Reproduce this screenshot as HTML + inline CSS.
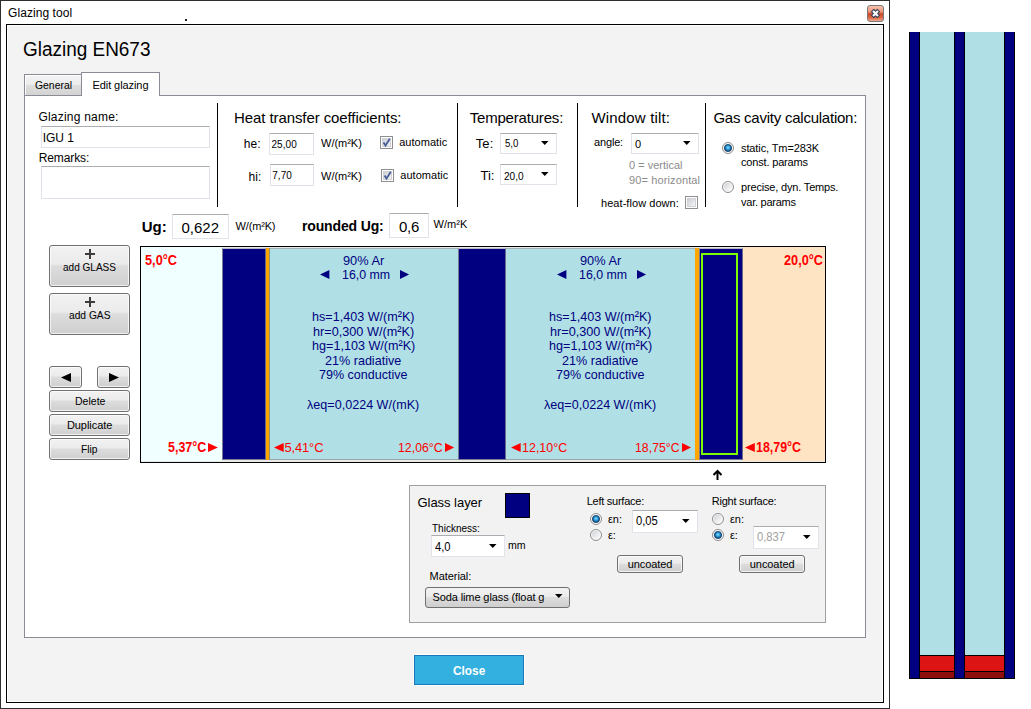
<!DOCTYPE html><html><head><meta charset="utf-8"><style>
html,body{margin:0;padding:0;background:#fff;width:1031px;height:709px;overflow:hidden;position:relative}
body{font-family:"Liberation Sans",sans-serif;color:#000}
.t{position:absolute;white-space:nowrap}
svg{overflow:visible}
</style></head><body>
<div style="position:absolute;left:0px;top:0px;width:890px;height:709px;box-sizing:border-box;border:1px solid #2e2e2e;background:#fff;"></div>
<div class="t" style="left:8.10px;top:6.54px;font-size:12px;line-height:12px;letter-spacing:0.058px;">Glazing tool</div>
<div style="position:absolute;left:185px;top:19px;width:2px;height:2px;background:#222"></div>
<div style="position:absolute;left:867px;top:5px;width:17px;height:17px;box-sizing:border-box;border:1px solid #7a7a7a;border-radius:3px;background:linear-gradient(#f8c3ae 0%,#ec9275 40%,#c8482a 52%,#d9633f 75%,#f0a88c 100%);"></div>
<svg style="position:absolute;left:867px;top:5px" width="17" height="17"><path d="M6.8 6.8 L10.2 10.2 M10.2 6.8 L6.8 10.2" stroke="#2f3e55" stroke-width="4.2" stroke-linecap="square"/><path d="M6.8 6.8 L10.2 10.2 M10.2 6.8 L6.8 10.2" stroke="#fff" stroke-width="2.2" stroke-linecap="square"/></svg>
<div style="position:absolute;left:6px;top:24px;width:878px;height:679px;box-sizing:border-box;border:1px solid #000;background:#f3f3f3;box-shadow:inset 0 0 0 1px #fff;"></div>
<div class="t" style="left:22.80px;top:39.07px;font-size:20px;line-height:20px;transform:scaleX(0.9473);transform-origin:0 0;">Glazing EN673</div>
<div style="position:absolute;left:24px;top:74px;width:58px;height:22px;box-sizing:border-box;border:1px solid #898c95;border-bottom:none;background:linear-gradient(#f4f4f4 0%,#ececec 45%,#dedede 50%,#d2d2d2 100%);box-shadow:inset 1px 1px 0 #fff;"></div>
<div style="position:absolute;left:24px;top:95px;width:842px;height:543px;box-sizing:border-box;border:1px solid #898c95;background:#fff;"></div>
<div style="position:absolute;left:81px;top:72px;width:79px;height:24px;box-sizing:border-box;border:1px solid #898c95;border-bottom:none;background:#fff;"></div>
<div class="t" style="left:35.00px;top:79.79px;font-size:11px;line-height:11px;transform:scaleX(0.9448);transform-origin:0 0;">General</div>
<div class="t" style="left:92.50px;top:79.69px;font-size:11px;line-height:11px;letter-spacing:-0.079px;">Edit glazing</div>
<div style="position:absolute;left:217px;top:103px;width:1px;height:104px;box-sizing:border-box;background:#000;"></div>
<div style="position:absolute;left:457px;top:103px;width:1px;height:104px;box-sizing:border-box;background:#000;"></div>
<div style="position:absolute;left:577px;top:103px;width:1px;height:104px;box-sizing:border-box;background:#000;"></div>
<div style="position:absolute;left:705px;top:103px;width:1px;height:104px;box-sizing:border-box;background:#000;"></div>
<div class="t" style="left:38.40px;top:110.64px;font-size:12px;line-height:12px;letter-spacing:0.217px;">Glazing name:</div>
<div style="position:absolute;left:41px;top:126px;width:169px;height:22px;box-sizing:border-box;background:#fff;border:1px solid #e2e3ea;border-top-color:#abadb3;"></div>
<div class="t" style="left:42.80px;top:131.84px;font-size:12px;line-height:12px;letter-spacing:-0.080px;">IGU 1</div>
<div class="t" style="left:38.70px;top:151.64px;font-size:12px;line-height:12px;letter-spacing:-0.109px;">Remarks:</div>
<div style="position:absolute;left:41px;top:166px;width:169px;height:33px;box-sizing:border-box;background:#fff;border:1px solid #e2e3ea;border-top-color:#abadb3;"></div>
<div class="t" style="left:234.00px;top:110.10px;font-size:15px;line-height:15px;letter-spacing:-0.088px;">Heat transfer coefficients:</div>
<div class="t" style="left:243.70px;top:137.74px;font-size:12px;line-height:12px;letter-spacing:0.160px;">he:</div>
<div style="position:absolute;left:269px;top:133px;width:45px;height:22px;box-sizing:border-box;background:#fff;border:1px solid #e2e3ea;border-top-color:#abadb3;"></div>
<div class="t" style="left:271.40px;top:140.44px;font-size:10px;line-height:10px;letter-spacing:0.100px;">25,00</div>
<div class="t" style="left:321.10px;top:137.69px;font-size:11px;line-height:11px;letter-spacing:-0.037px;">W/(m²K)</div>
<div style="position:absolute;left:380px;top:136px;width:13px;height:13px;box-sizing:border-box;border:1px solid #8e8f8f;background:#fff;"></div>
<div style="position:absolute;left:382px;top:138px;width:9px;height:9px;box-sizing:border-box;border:1px solid #d0d2d6;background:linear-gradient(135deg,#cbcfd5,#f4f4f4);"></div>
<svg style="position:absolute;left:380px;top:136px" width="13" height="13"><path d="M3.5 6.5 L5.5 9.5 L9.8 2.8" stroke="#4a5f97" stroke-width="1.8" fill="none"/></svg>
<div class="t" style="left:399.20px;top:137.29px;font-size:11px;line-height:11px;letter-spacing:0.032px;">automatic</div>
<div class="t" style="left:248.40px;top:170.74px;font-size:12px;line-height:12px;letter-spacing:0.140px;">hi:</div>
<div style="position:absolute;left:270px;top:164px;width:44px;height:22px;box-sizing:border-box;background:#fff;border:1px solid #e2e3ea;border-top-color:#abadb3;"></div>
<div class="t" style="left:272.30px;top:171.44px;font-size:10px;line-height:10px;">7,70</div>
<div class="t" style="left:321.10px;top:170.99px;font-size:11px;line-height:11px;letter-spacing:-0.037px;">W/(m²K)</div>
<div style="position:absolute;left:381px;top:169px;width:13px;height:13px;box-sizing:border-box;border:1px solid #8e8f8f;background:#fff;"></div>
<div style="position:absolute;left:383px;top:171px;width:9px;height:9px;box-sizing:border-box;border:1px solid #d0d2d6;background:linear-gradient(135deg,#cbcfd5,#f4f4f4);"></div>
<svg style="position:absolute;left:381px;top:169px" width="13" height="13"><path d="M3.5 6.5 L5.5 9.5 L9.8 2.8" stroke="#4a5f97" stroke-width="1.8" fill="none"/></svg>
<div class="t" style="left:400.30px;top:170.29px;font-size:11px;line-height:11px;letter-spacing:0.032px;">automatic</div>
<div class="t" style="left:469.70px;top:110.30px;font-size:15px;line-height:15px;letter-spacing:-0.188px;">Temperatures:</div>
<div class="t" style="left:475.80px;top:136.80px;font-size:13px;line-height:13px;letter-spacing:0.055px;">Te:</div>
<div style="position:absolute;left:500px;top:133px;width:57px;height:21px;box-sizing:border-box;background:#fff;border:1px solid #e2e3ea;border-top-color:#abadb3;"></div>
<svg style="position:absolute;left:541px;top:141px" width="8" height="5"><polygon points="0,0 7.5,0 3.75,4" fill="#000"/></svg>
<div class="t" style="left:504.60px;top:138.29px;font-size:11px;line-height:11px;transform:scaleX(0.8764);transform-origin:0 0;">5,0</div>
<div class="t" style="left:480.50px;top:169.40px;font-size:13px;line-height:13px;">Ti:</div>
<div style="position:absolute;left:500px;top:164px;width:57px;height:21px;box-sizing:border-box;background:#fff;border:1px solid #e2e3ea;border-top-color:#abadb3;"></div>
<svg style="position:absolute;left:541px;top:172px" width="8" height="5"><polygon points="0,0 7.5,0 3.75,4" fill="#000"/></svg>
<div class="t" style="left:504.30px;top:171.09px;font-size:11px;line-height:11px;transform:scaleX(0.9184);transform-origin:0 0;">20,0</div>
<div class="t" style="left:591.50px;top:110.00px;font-size:15px;line-height:15px;letter-spacing:0.159px;">Window tilt:</div>
<div class="t" style="left:594.10px;top:137.39px;font-size:11px;line-height:11px;letter-spacing:-0.184px;">angle:</div>
<div style="position:absolute;left:631px;top:133px;width:68px;height:21px;box-sizing:border-box;background:#fff;border:1px solid #e2e3ea;border-top-color:#abadb3;"></div>
<svg style="position:absolute;left:683px;top:141px" width="8" height="5"><polygon points="0,0 7.5,0 3.75,4" fill="#000"/></svg>
<div class="t" style="left:635.00px;top:139.29px;font-size:11px;line-height:11px;">0</div>
<div class="t" style="left:629.00px;top:160.09px;font-size:11px;line-height:11px;letter-spacing:-0.005px;color:#8c8c8c;">0 = vertical</div>
<div class="t" style="left:629.00px;top:175.39px;font-size:11px;line-height:11px;letter-spacing:0.122px;color:#8c8c8c;">90= horizontal</div>
<div class="t" style="left:601.00px;top:197.79px;font-size:11px;line-height:11px;letter-spacing:0.057px;">heat-flow down:</div>
<div style="position:absolute;left:685px;top:196px;width:13px;height:13px;box-sizing:border-box;border:1px solid #8e8f8f;background:#fff;"></div>
<div style="position:absolute;left:687px;top:198px;width:9px;height:9px;box-sizing:border-box;border:1px solid #d0d2d6;background:linear-gradient(135deg,#cbcfd5,#f4f4f4);"></div>
<div class="t" style="left:713.40px;top:110.00px;font-size:15px;line-height:15px;letter-spacing:-0.239px;">Gas cavity calculation:</div>
<svg style="position:absolute;left:722px;top:142px" width="12" height="12"><defs><radialGradient id="rg722142" cx="0.5" cy="0.45" r="0.55"><stop offset="0" stop-color="#8fe0ff"/><stop offset="0.55" stop-color="#1e90d0"/><stop offset="1" stop-color="#0c2f5c"/></radialGradient></defs><circle cx="6" cy="6" r="5.5" fill="#fafafa" stroke="#8e8e8e"/><circle cx="6" cy="6" r="3.6" fill="url(#rg722142)" stroke="#153a66" stroke-width="0.8"/></svg>
<div class="t" style="left:741.00px;top:142.59px;font-size:11px;line-height:11px;letter-spacing:-0.109px;">static, Tm=283K</div>
<div class="t" style="left:741.00px;top:157.19px;font-size:11px;line-height:11px;letter-spacing:-0.173px;">const. params</div>
<svg style="position:absolute;left:722px;top:181px" width="12" height="12"><defs><linearGradient id="lg722181" x1="0" y1="0" x2="1" y2="1"><stop offset="0" stop-color="#cfd2d6"/><stop offset="1" stop-color="#ffffff"/></linearGradient></defs><circle cx="6" cy="6" r="5.5" fill="#fafafa" stroke="#8e8e8e"/><circle cx="6" cy="6" r="4.2" fill="url(#lg722181)"/></svg>
<div class="t" style="left:741.00px;top:182.39px;font-size:11px;line-height:11px;letter-spacing:-0.171px;">precise, dyn. Temps.</div>
<div class="t" style="left:741.00px;top:196.99px;font-size:11px;line-height:11px;letter-spacing:-0.242px;">var. params</div>
<div class="t" style="left:141.70px;top:218.50px;font-size:15px;line-height:15px;letter-spacing:-0.025px;font-weight:bold;">Ug:</div>
<div style="position:absolute;left:172px;top:214px;width:57px;height:25px;box-sizing:border-box;background:#fff;border:1px solid #e2e3ea;border-top-color:#abadb3;"></div>
<div class="t" style="left:181.40px;top:220.10px;font-size:15px;line-height:15px;letter-spacing:0.025px;">0,622</div>
<div class="t" style="left:235.50px;top:220.79px;font-size:11px;line-height:11px;letter-spacing:-0.153px;">W/(m²K)</div>
<div class="t" style="left:302.00px;top:219.15px;font-size:14px;line-height:14px;letter-spacing:-0.146px;font-weight:bold;">rounded Ug:</div>
<div style="position:absolute;left:389px;top:213px;width:40px;height:25px;box-sizing:border-box;background:#fff;border:1px solid #e2e3ea;border-top-color:#abadb3;"></div>
<div class="t" style="left:398.90px;top:218.90px;font-size:15px;line-height:15px;letter-spacing:-0.225px;">0,6</div>
<div class="t" style="left:433.40px;top:219.29px;font-size:11px;line-height:11px;letter-spacing:0.113px;">W/m²K</div>
<div style="position:absolute;left:49px;top:245px;width:81px;height:42px;box-sizing:border-box;border:1px solid #707070;border-radius:3px;background:linear-gradient(#f2f2f2 0%,#ebebeb 45%,#dddddd 50%,#cfcfcf 100%);box-shadow:inset 0 0 0 1px rgba(255,255,255,.7);"></div>
<div style="position:absolute;left:49px;top:293px;width:81px;height:42px;box-sizing:border-box;border:1px solid #707070;border-radius:3px;background:linear-gradient(#f2f2f2 0%,#ebebeb 45%,#dddddd 50%,#cfcfcf 100%);box-shadow:inset 0 0 0 1px rgba(255,255,255,.7);"></div>
<div style="position:absolute;left:85px;top:253px;width:10px;height:2px;background:#3c3c3c"></div>
<div style="position:absolute;left:89px;top:249px;width:2px;height:10px;background:#3c3c3c"></div>
<div style="position:absolute;left:85px;top:301px;width:10px;height:2px;background:#3c3c3c"></div>
<div style="position:absolute;left:89px;top:297px;width:2px;height:10px;background:#3c3c3c"></div>
<div class="t" style="left:63.00px;top:262.19px;font-size:11px;line-height:11px;transform:scaleX(0.9125);transform-origin:0 0;">add GLASS</div>
<div class="t" style="left:68.80px;top:310.09px;font-size:11px;line-height:11px;transform:scaleX(0.9292);transform-origin:0 0;">add GAS</div>
<div style="position:absolute;left:49px;top:366px;width:33px;height:22px;box-sizing:border-box;border:1px solid #707070;border-radius:3px;background:linear-gradient(#f2f2f2 0%,#ebebeb 45%,#dddddd 50%,#cfcfcf 100%);box-shadow:inset 0 0 0 1px rgba(255,255,255,.7);"></div>
<div style="position:absolute;left:97px;top:366px;width:33px;height:22px;box-sizing:border-box;border:1px solid #707070;border-radius:3px;background:linear-gradient(#f2f2f2 0%,#ebebeb 45%,#dddddd 50%,#cfcfcf 100%);box-shadow:inset 0 0 0 1px rgba(255,255,255,.7);"></div>
<svg style="position:absolute;left:61px;top:372.5px" width="10" height="9.0"><polygon points="10,0 0,4.5 10,9.0" fill="#000"/></svg>
<svg style="position:absolute;left:108.5px;top:372.5px" width="10.0" height="9.0"><polygon points="0,0 10.0,4.5 0,9.0" fill="#000"/></svg>
<div style="position:absolute;left:49px;top:390px;width:81px;height:22px;box-sizing:border-box;border:1px solid #707070;border-radius:3px;background:linear-gradient(#f2f2f2 0%,#ebebeb 45%,#dddddd 50%,#cfcfcf 100%);box-shadow:inset 0 0 0 1px rgba(255,255,255,.7);"></div>
<div class="t" style="left:74.60px;top:396.39px;font-size:11px;line-height:11px;transform:scaleX(0.9563);transform-origin:0 0;">Delete</div>
<div style="position:absolute;left:49px;top:414px;width:81px;height:22px;box-sizing:border-box;border:1px solid #707070;border-radius:3px;background:linear-gradient(#f2f2f2 0%,#ebebeb 45%,#dddddd 50%,#cfcfcf 100%);box-shadow:inset 0 0 0 1px rgba(255,255,255,.7);"></div>
<div class="t" style="left:66.90px;top:420.09px;font-size:11px;line-height:11px;letter-spacing:-0.046px;">Duplicate</div>
<div style="position:absolute;left:49px;top:438px;width:81px;height:22px;box-sizing:border-box;border:1px solid #707070;border-radius:3px;background:linear-gradient(#f2f2f2 0%,#ebebeb 45%,#dddddd 50%,#cfcfcf 100%);box-shadow:inset 0 0 0 1px rgba(255,255,255,.7);"></div>
<div class="t" style="left:81.40px;top:444.39px;font-size:11px;line-height:11px;transform:scaleX(0.9317);transform-origin:0 0;">Flip</div>
<div style="position:absolute;left:140px;top:246px;width:686px;height:217px;box-sizing:border-box;border:1px solid #000;background:#e9e9e5;"></div>
<div style="position:absolute;left:141px;top:247px;width:81px;height:214px;box-sizing:border-box;background:#f0ffff;"></div>
<div style="position:absolute;left:743px;top:247px;width:82px;height:214px;box-sizing:border-box;background:#ffe4c4;"></div>
<div style="position:absolute;left:269px;top:248px;width:189px;height:212px;box-sizing:border-box;background:#b0e0e6;border-bottom:1px solid #9aa8ab;border-top:1px solid #a4b2b5;"></div>
<div style="position:absolute;left:506px;top:248px;width:189px;height:212px;box-sizing:border-box;background:#b0e0e6;border-bottom:1px solid #9aa8ab;border-top:1px solid #a4b2b5;"></div>
<div style="position:absolute;left:222px;top:248px;width:44px;height:212px;box-sizing:border-box;background:#000080;border:1px solid #7a7a94;border-top-color:#b8b8c8;border-right-color:#6a6a8a;"></div>
<div style="position:absolute;left:458px;top:248px;width:48px;height:212px;box-sizing:border-box;background:#000080;border:1px solid #7a7a94;border-top-color:#b8b8c8;border-right-color:#6a6a8a;"></div>
<div style="position:absolute;left:699px;top:248px;width:44px;height:212px;box-sizing:border-box;background:#000080;border:1px solid #7a7a94;border-top-color:#b8b8c8;border-right-color:#6a6a8a;"></div>
<div style="position:absolute;left:266px;top:248px;width:3px;height:212px;box-sizing:border-box;background:#ffa500;"></div>
<div style="position:absolute;left:269px;top:248px;width:1px;height:212px;box-sizing:border-box;background:#8f8f7a;"></div>
<div style="position:absolute;left:695px;top:248px;width:4px;height:212px;box-sizing:border-box;background:#ffa500;"></div>
<div style="position:absolute;left:701px;top:253px;width:37px;height:202px;box-sizing:border-box;border:2px solid #7cfc00;"></div>
<div class="t" style="left:144.90px;top:253.15px;font-size:14px;line-height:14px;transform:scaleX(0.9106);transform-origin:0 0;font-weight:bold;color:#ff0000;">5,0°C</div>
<div class="t" style="left:784.00px;top:253.15px;font-size:14px;line-height:14px;transform:scaleX(0.9074);transform-origin:0 0;font-weight:bold;color:#ff0000;">20,0°C</div>
<div class="t" style="left:342.90px;top:253.89px;font-size:13.6px;line-height:13.6px;transform:scaleX(0.9408);transform-origin:0 0;color:#000080;">90% Ar</div>
<svg style="position:absolute;left:319.9px;top:270px" width="9.400000000000034" height="9"><polygon points="9.400000000000034,0 0,4.5 9.400000000000034,9" fill="#000080"/></svg>
<div class="t" style="left:342.00px;top:267.59px;font-size:13.6px;line-height:13.6px;transform:scaleX(0.9111);transform-origin:0 0;color:#000080;">16,0 mm</div>
<svg style="position:absolute;left:399.6px;top:270px" width="9.099999999999966" height="9"><polygon points="0,0 9.099999999999966,4.5 0,9" fill="#000080"/></svg>
<div class="t" style="left:312.20px;top:310.49px;font-size:13.6px;line-height:13.6px;transform:scaleX(0.9268);transform-origin:0 0;color:#000080;">hs=1,403 W/(m²K)</div>
<div class="t" style="left:312.95px;top:324.69px;font-size:13.6px;line-height:13.6px;transform:scaleX(0.9327);transform-origin:0 0;color:#000080;">hr=0,300 W/(m²K)</div>
<div class="t" style="left:311.80px;top:339.19px;font-size:13.6px;line-height:13.6px;transform:scaleX(0.9272);transform-origin:0 0;color:#000080;">hg=1,103 W/(m²K)</div>
<div class="t" style="left:325.35px;top:353.69px;font-size:13.6px;line-height:13.6px;transform:scaleX(0.9258);transform-origin:0 0;color:#000080;">21% radiative</div>
<div class="t" style="left:319.20px;top:368.19px;font-size:13.6px;line-height:13.6px;transform:scaleX(0.9228);transform-origin:0 0;color:#000080;">79% conductive</div>
<div class="t" style="left:307.35px;top:397.69px;font-size:13.6px;line-height:13.6px;transform:scaleX(0.9257);transform-origin:0 0;color:#000080;">λeq=0,0224 W/(mK)</div>
<div class="t" style="left:579.90px;top:253.89px;font-size:13.6px;line-height:13.6px;transform:scaleX(0.9408);transform-origin:0 0;color:#000080;">90% Ar</div>
<svg style="position:absolute;left:556.9px;top:270px" width="9.399999999999977" height="9"><polygon points="9.399999999999977,0 0,4.5 9.399999999999977,9" fill="#000080"/></svg>
<div class="t" style="left:579.00px;top:267.59px;font-size:13.6px;line-height:13.6px;transform:scaleX(0.9111);transform-origin:0 0;color:#000080;">16,0 mm</div>
<svg style="position:absolute;left:636.6px;top:270px" width="9.100000000000023" height="9"><polygon points="0,0 9.100000000000023,4.5 0,9" fill="#000080"/></svg>
<div class="t" style="left:549.20px;top:310.49px;font-size:13.6px;line-height:13.6px;transform:scaleX(0.9268);transform-origin:0 0;color:#000080;">hs=1,403 W/(m²K)</div>
<div class="t" style="left:549.95px;top:324.69px;font-size:13.6px;line-height:13.6px;transform:scaleX(0.9327);transform-origin:0 0;color:#000080;">hr=0,300 W/(m²K)</div>
<div class="t" style="left:548.80px;top:339.19px;font-size:13.6px;line-height:13.6px;transform:scaleX(0.9272);transform-origin:0 0;color:#000080;">hg=1,103 W/(m²K)</div>
<div class="t" style="left:562.35px;top:353.69px;font-size:13.6px;line-height:13.6px;transform:scaleX(0.9258);transform-origin:0 0;color:#000080;">21% radiative</div>
<div class="t" style="left:556.20px;top:368.19px;font-size:13.6px;line-height:13.6px;transform:scaleX(0.9228);transform-origin:0 0;color:#000080;">79% conductive</div>
<div class="t" style="left:544.35px;top:397.69px;font-size:13.6px;line-height:13.6px;transform:scaleX(0.9257);transform-origin:0 0;color:#000080;">λeq=0,0224 W/(mK)</div>
<div class="t" style="left:167.80px;top:440.15px;font-size:14px;line-height:14px;transform:scaleX(0.8888);transform-origin:0 0;font-weight:bold;color:#ff0000;">5,37°C</div>
<svg style="position:absolute;left:207.9px;top:443px" width="9.900000000000006" height="9"><polygon points="0,0 9.900000000000006,4.5 0,9" fill="#ff0000"/></svg>
<svg style="position:absolute;left:273.7px;top:443px" width="9.699999999999989" height="9"><polygon points="9.699999999999989,0 0,4.5 9.699999999999989,9" fill="#ff0000"/></svg>
<div class="t" style="left:284.40px;top:440.50px;font-size:13px;line-height:13px;letter-spacing:-0.142px;color:#ff0000;">5,41°C</div>
<div class="t" style="left:397.90px;top:440.50px;font-size:13px;line-height:13px;transform:scaleX(0.9477);transform-origin:0 0;color:#ff0000;">12,06°C</div>
<svg style="position:absolute;left:445px;top:443px" width="9.100000000000023" height="9"><polygon points="0,0 9.100000000000023,4.5 0,9" fill="#ff0000"/></svg>
<svg style="position:absolute;left:510.7px;top:443px" width="9.699999999999989" height="9"><polygon points="9.699999999999989,0 0,4.5 9.699999999999989,9" fill="#ff0000"/></svg>
<div class="t" style="left:522.30px;top:440.50px;font-size:13px;line-height:13px;transform:scaleX(0.9605);transform-origin:0 0;color:#ff0000;">12,10°C</div>
<div class="t" style="left:634.80px;top:440.50px;font-size:13px;line-height:13px;transform:scaleX(0.9477);transform-origin:0 0;color:#ff0000;">18,75°C</div>
<svg style="position:absolute;left:682px;top:443px" width="9" height="9"><polygon points="0,0 9,4.5 0,9" fill="#ff0000"/></svg>
<svg style="position:absolute;left:744.7px;top:443px" width="9.799999999999955" height="9"><polygon points="9.799999999999955,0 0,4.5 9.799999999999955,9" fill="#ff0000"/></svg>
<div class="t" style="left:756.40px;top:440.15px;font-size:14px;line-height:14px;transform:scaleX(0.8879);transform-origin:0 0;font-weight:bold;color:#ff0000;">18,79°C</div>
<svg style="position:absolute;left:711px;top:468px" width="13" height="13"><path d="M6.5 12 V2.6 M2.5 7 L6.5 3 L10.5 7" stroke="#000" stroke-width="2" fill="none"/></svg>
<div style="position:absolute;left:409px;top:485px;width:417px;height:138px;box-sizing:border-box;border:1px solid #a0a0a0;background:#f2f2f2;"></div>
<div class="t" style="left:417.50px;top:495.80px;font-size:13px;line-height:13px;letter-spacing:-0.040px;">Glass layer</div>
<div style="position:absolute;left:505px;top:493px;width:25px;height:25px;box-sizing:border-box;border:1px solid #000;background:#000080;"></div>
<div class="t" style="left:431.90px;top:522.59px;font-size:11px;line-height:11px;transform:scaleX(0.9091);transform-origin:0 0;">Thickness:</div>
<div style="position:absolute;left:431px;top:535px;width:74px;height:22px;box-sizing:border-box;background:#fff;border:1px solid #e2e3ea;border-top-color:#abadb3;"></div>
<svg style="position:absolute;left:489px;top:544px" width="8" height="5"><polygon points="0,0 7.5,0 3.75,4" fill="#000"/></svg>
<div class="t" style="left:434.90px;top:539.90px;font-size:13px;line-height:13px;transform:scaleX(0.8633);transform-origin:0 0;">4,0</div>
<div class="t" style="left:507.50px;top:539.69px;font-size:11px;line-height:11px;transform:scaleX(0.9635);transform-origin:0 0;">mm</div>
<div class="t" style="left:429.60px;top:570.59px;font-size:11px;line-height:11px;letter-spacing:-0.066px;">Material:</div>
<div style="position:absolute;left:425px;top:587px;width:145px;height:21px;box-sizing:border-box;border:1px solid #707070;border-radius:3px;background:linear-gradient(#f2f2f2 0%,#ebebeb 45%,#dddddd 50%,#cfcfcf 100%);"></div>
<div class="t" style="left:432.40px;top:592.29px;font-size:11px;line-height:11px;letter-spacing:-0.100px;">Soda lime glass (float g</div>
<svg style="position:absolute;left:555px;top:594px" width="8" height="5"><polygon points="0,0 7.5,0 3.75,4" fill="#000"/></svg>
<div class="t" style="left:586.70px;top:495.59px;font-size:11px;line-height:11px;letter-spacing:-0.250px;">Left surface:</div>
<svg style="position:absolute;left:590px;top:513px" width="12" height="12"><defs><radialGradient id="rg590513" cx="0.5" cy="0.45" r="0.55"><stop offset="0" stop-color="#8fe0ff"/><stop offset="0.55" stop-color="#1e90d0"/><stop offset="1" stop-color="#0c2f5c"/></radialGradient></defs><circle cx="6" cy="6" r="5.5" fill="#fafafa" stroke="#8e8e8e"/><circle cx="6" cy="6" r="3.6" fill="url(#rg590513)" stroke="#153a66" stroke-width="0.8"/></svg>
<div class="t" style="left:607.90px;top:514.39px;font-size:11px;line-height:11px;">εn:</div>
<svg style="position:absolute;left:590px;top:529px" width="12" height="12"><defs><linearGradient id="lg590529" x1="0" y1="0" x2="1" y2="1"><stop offset="0" stop-color="#cfd2d6"/><stop offset="1" stop-color="#ffffff"/></linearGradient></defs><circle cx="6" cy="6" r="5.5" fill="#fafafa" stroke="#8e8e8e"/><circle cx="6" cy="6" r="4.2" fill="url(#lg590529)"/></svg>
<div class="t" style="left:607.90px;top:529.89px;font-size:11px;line-height:11px;">ε:</div>
<div style="position:absolute;left:632px;top:510px;width:66px;height:23px;box-sizing:border-box;background:#fff;border:1px solid #e2e3ea;border-top-color:#abadb3;"></div>
<svg style="position:absolute;left:682px;top:519px" width="8" height="5"><polygon points="0,0 7.5,0 3.75,4" fill="#000"/></svg>
<div class="t" style="left:635.80px;top:515.44px;font-size:12px;line-height:12px;transform:scaleX(0.9316);transform-origin:0 0;">0,05</div>
<div style="position:absolute;left:617px;top:555px;width:66px;height:18px;box-sizing:border-box;border:1px solid #707070;border-radius:3px;background:linear-gradient(#f2f2f2 0%,#ebebeb 45%,#dddddd 50%,#cfcfcf 100%);box-shadow:inset 0 0 0 1px rgba(255,255,255,.7);"></div>
<div class="t" style="left:627.70px;top:558.89px;font-size:11px;line-height:11px;letter-spacing:-0.073px;">uncoated</div>
<div class="t" style="left:711.70px;top:495.59px;font-size:11px;line-height:11px;letter-spacing:-0.221px;">Right surface:</div>
<svg style="position:absolute;left:712px;top:513px" width="12" height="12"><defs><linearGradient id="lg712513" x1="0" y1="0" x2="1" y2="1"><stop offset="0" stop-color="#cfd2d6"/><stop offset="1" stop-color="#ffffff"/></linearGradient></defs><circle cx="6" cy="6" r="5.5" fill="#fafafa" stroke="#8e8e8e"/><circle cx="6" cy="6" r="4.2" fill="url(#lg712513)"/></svg>
<div class="t" style="left:729.90px;top:514.09px;font-size:11px;line-height:11px;">εn:</div>
<svg style="position:absolute;left:712px;top:529px" width="12" height="12"><defs><radialGradient id="rg712529" cx="0.5" cy="0.45" r="0.55"><stop offset="0" stop-color="#8fe0ff"/><stop offset="0.55" stop-color="#1e90d0"/><stop offset="1" stop-color="#0c2f5c"/></radialGradient></defs><circle cx="6" cy="6" r="5.5" fill="#fafafa" stroke="#8e8e8e"/><circle cx="6" cy="6" r="3.6" fill="url(#rg712529)" stroke="#153a66" stroke-width="0.8"/></svg>
<div class="t" style="left:729.90px;top:529.89px;font-size:11px;line-height:11px;">ε:</div>
<div style="position:absolute;left:753px;top:526px;width:66px;height:23px;box-sizing:border-box;background:#fff;border:1px solid #e2e3ea;border-top-color:#abadb3;"></div>
<svg style="position:absolute;left:803px;top:535px" width="8" height="5"><polygon points="0,0 7.5,0 3.75,4" fill="#000"/></svg>
<div class="t" style="left:756.90px;top:531.04px;font-size:12px;line-height:12px;transform:scaleX(0.9300);transform-origin:0 0;color:#a0a0a0;">0,837</div>
<div style="position:absolute;left:739px;top:555px;width:66px;height:18px;box-sizing:border-box;border:1px solid #707070;border-radius:3px;background:linear-gradient(#f2f2f2 0%,#ebebeb 45%,#dddddd 50%,#cfcfcf 100%);box-shadow:inset 0 0 0 1px rgba(255,255,255,.7);"></div>
<div class="t" style="left:749.80px;top:558.89px;font-size:11px;line-height:11px;letter-spacing:-0.073px;">uncoated</div>
<div style="position:absolute;left:414px;top:655px;width:110px;height:30px;box-sizing:border-box;border:1px solid #1a78b8;background:#33b0df;box-shadow:0 0 0 1px #fff;"></div>
<div class="t" style="left:452.90px;top:664.00px;font-size:13px;line-height:13px;transform:scaleX(0.9106);transform-origin:0 0;font-weight:bold;color:#fff;">Close</div>
<svg style="position:absolute;left:0;top:0" width="1031" height="709" shape-rendering="crispEdges"><rect x="909" y="32" width="106" height="647" fill="#000080"/><rect x="920" y="32" width="34" height="623" fill="#b0e0e6"/><rect x="920" y="655" width="34" height="1" fill="#000"/><rect x="920" y="656" width="34" height="15" fill="#dc1414"/><rect x="920" y="671" width="34" height="1" fill="#000"/><rect x="920" y="672" width="34" height="6" fill="#8e0e0e"/><rect x="965" y="32" width="39" height="623" fill="#b0e0e6"/><rect x="965" y="655" width="39" height="1" fill="#000"/><rect x="965" y="656" width="39" height="15" fill="#dc1414"/><rect x="965" y="671" width="39" height="1" fill="#000"/><rect x="965" y="672" width="39" height="6" fill="#8e0e0e"/><rect x="909" y="32" width="1" height="647" fill="#000"/><rect x="919" y="32" width="1" height="647" fill="#000"/><rect x="954" y="32" width="1" height="647" fill="#000"/><rect x="964" y="32" width="1" height="647" fill="#000"/><rect x="1004" y="32" width="1" height="647" fill="#000"/><rect x="1014" y="32" width="1" height="647" fill="#000"/><rect x="909" y="678" width="106" height="1" fill="#000"/></svg>
</body></html>
